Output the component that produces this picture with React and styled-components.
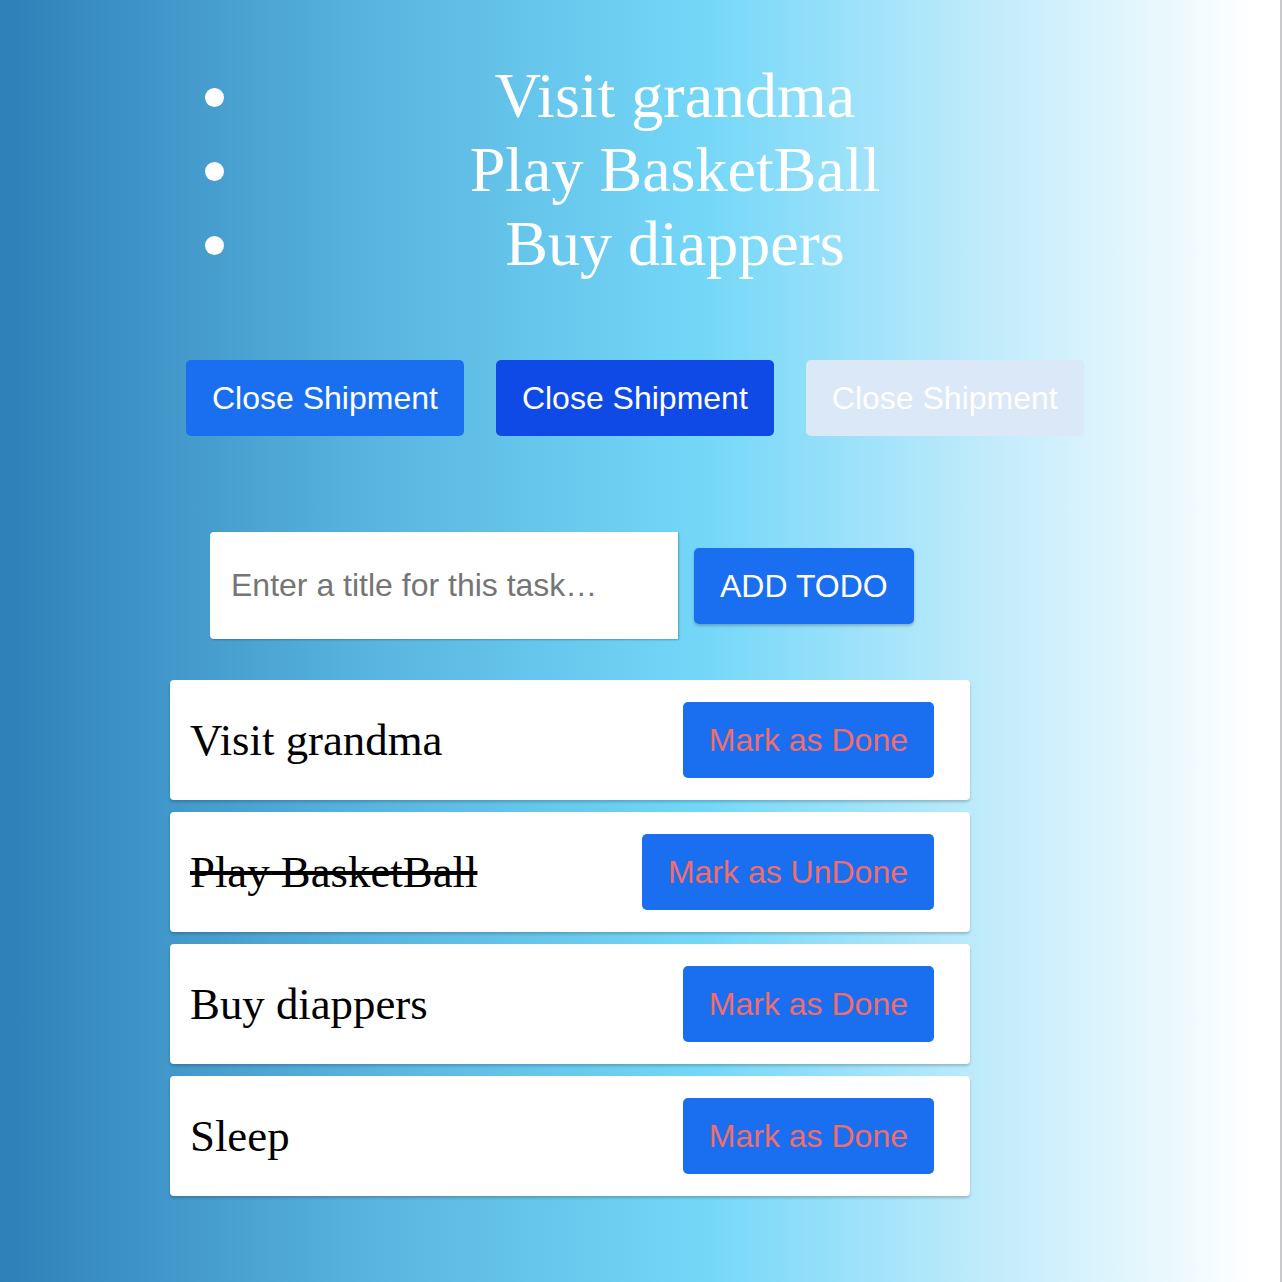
import React, { useState } from 'react';
import styled, { createGlobalStyle } from "styled-components";

const GlobalStyle = createGlobalStyle`
    html, body {
        margin: 0;
        padding: 0;
    }
    body {
        font-family: "Liberation Serif", "Times New Roman", serif;
    }
`;

// 전체 화면
const Page = styled.div`
    box-sizing: border-box;
    min-height: 1282px;
    padding-bottom: 40px;
    background: linear-gradient(90deg, #2e80b8 0%, #5ab6e0 30%, #74d7f8 55%, #c3ecfb 78%, #ffffff 98%);
    border-right: 2px solid #c9c9cc;
    display: flex;
    flex-direction: column;
    align-items: flex-start;
`;

// 상단 목록
const TitleList = styled.ul`
    margin: 59px 0 0 250px;
    padding: 0;
    width: 850px;
    font-size: 64px;
    color: #fff;
    text-align: center;
`;

const TitleItem = styled.li``;

// 버튼 줄
const ButtonRow = styled.div`
    display: flex;
    gap: 32px;
    margin: 79px 0 0 186px;
`;

const BlueButton = styled.button`
    font-family: "Liberation Sans", Arial, sans-serif;
    font-size: 32px;
    line-height: 36px;
    padding: 20px 26px;
    border: none;
    border-radius: 5px;
    cursor: pointer;
    color: ${(props) => props.$textColor || "#fff"};
    background: ${(props) => props.$bg || "#1a6ff0"};
    box-shadow: ${(props) => props.$shadow ? "0 2px 3px rgba(0, 0, 0, 0.22)" : "none"};
    &:disabled {
        cursor: default;
    }
`;

// 입력 폼
const FormTag = styled.form`
    display: flex;
    align-items: center;
    gap: 16px;
    margin: 96px 0 0 210px;
`;

const TitleInput = styled.input`
    box-sizing: border-box;
    width: 468px;
    height: 107px;
    padding: 0 21px;
    border: none;
    border-radius: 4px 0 0 4px;
    background: #fff;
    box-shadow: 1px 1px 2px rgba(0, 0, 0, 0.25);
    font-family: "Liberation Sans", Arial, sans-serif;
    font-size: 32px;
    color: #333;
    outline: none;
    &::placeholder {
        color: #757575;
    }
`;

// 할일 목록
const TodoList = styled.div`
    display: flex;
    flex-direction: column;
    gap: 12px;
    margin: 41px 0 0 170px;
    width: 800px;
`;

const TodoCard = styled.div`
    box-sizing: border-box;
    height: 120px;
    display: flex;
    align-items: center;
    justify-content: space-between;
    padding: 0 36px 0 20px;
    background: #fff;
    border-radius: 4px;
    box-shadow: 0 2px 3px rgba(0, 0, 0, 0.2);
`;

const TodoTitle = styled.span`
    font-size: 44.8px;
    color: #000;
    text-decoration: ${(props) => props.$done ? "line-through" : "none"};
`;

function App() {
    const [todos, setTodos] = useState([
        { id: 1, title: "Visit grandma", done: false },
        { id: 2, title: "Play BasketBall", done: true },
        { id: 3, title: "Buy diappers", done: false },
        { id: 4, title: "Sleep", done: false },
    ]);
    const [inputValue, setInputValue] = useState("");

    const evtSubmitForm = (e) => {
        e.preventDefault();
        if (!inputValue.trim()) return;
        setTodos([...todos, { id: Date.now(), title: inputValue, done: false }]);
        setInputValue("");
    };

    const evtToggle = (id) => {
        setTodos(todos.map((t) => t.id === id ? { ...t, done: !t.done } : t));
    };

    return (
        <Page>
            <GlobalStyle />
            <TitleList>
                <TitleItem>Visit grandma</TitleItem>
                <TitleItem>Play BasketBall</TitleItem>
                <TitleItem>Buy diappers</TitleItem>
            </TitleList>

            <ButtonRow>
                <BlueButton>Close Shipment</BlueButton>
                <BlueButton $bg="#0f4ae6">Close Shipment</BlueButton>
                <BlueButton $bg="#dbe8f8" disabled>Close Shipment</BlueButton>
            </ButtonRow>

            <FormTag onSubmit={evtSubmitForm}>
                <TitleInput
                    placeholder="Enter a title for this task…"
                    value={inputValue}
                    onChange={(e) => setInputValue(e.target.value)}
                />
                <BlueButton type="submit" $shadow>ADD TODO</BlueButton>
            </FormTag>

            <TodoList>
                {todos.map((todo) => (
                    <TodoCard key={todo.id}>
                        <TodoTitle $done={todo.done}>{todo.title}</TodoTitle>
                        <BlueButton $textColor="#f26d6a" onClick={() => evtToggle(todo.id)}>
                            {todo.done ? "Mark as UnDone" : "Mark as Done"}
                        </BlueButton>
                    </TodoCard>
                ))}
            </TodoList>
        </Page>
    );
}

export default App;
